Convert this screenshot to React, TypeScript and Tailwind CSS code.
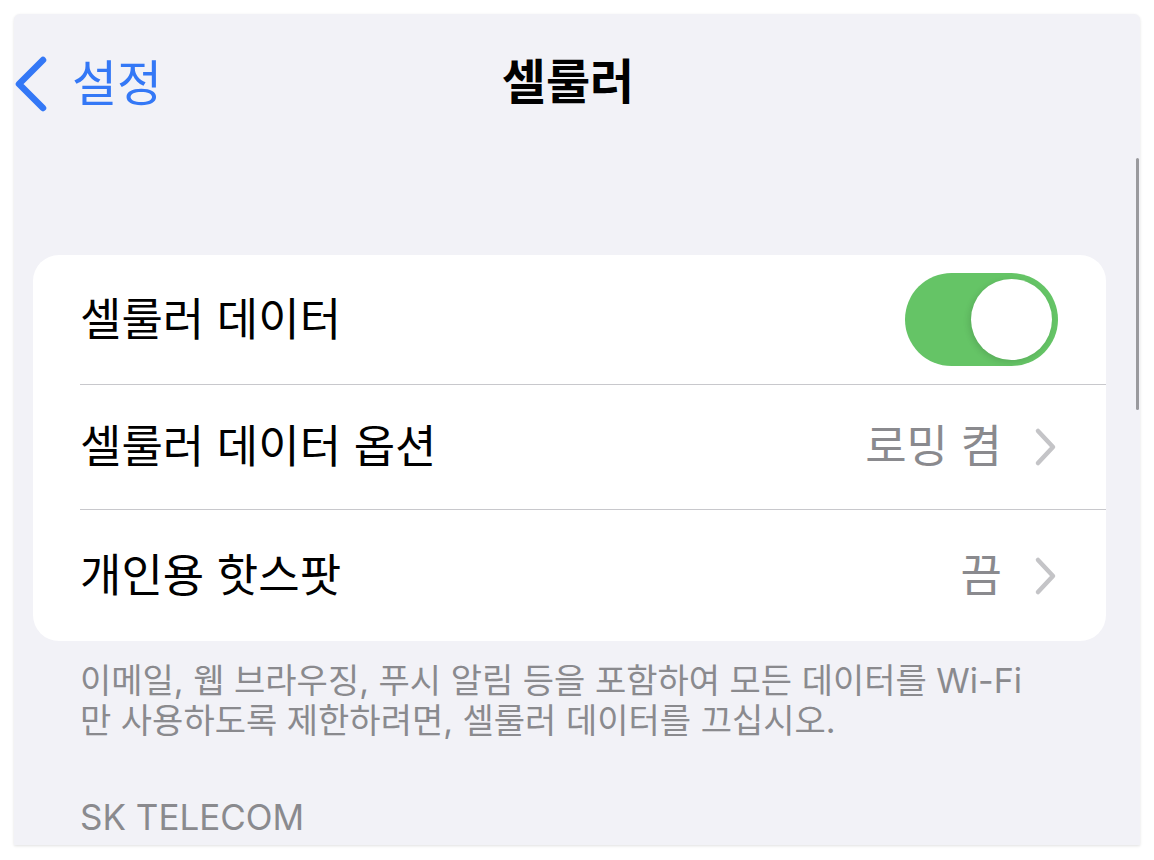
const font = "font-['Inter','Noto_Sans_CJK_KR',sans-serif]";

function Toggle() {
  return (
    <div className="flex h-[93px] w-[153px] items-center justify-end rounded-full bg-[#65c466] pr-[6px]">
      <div className="h-[81px] w-[81px] rounded-full bg-white shadow-[-2px_2px_6px_rgba(0,0,0,0.12)]" />
    </div>
  );
}

function Chevron() {
  return (
    <svg width="24" height="40" viewBox="0 0 24 40" fill="none">
      <polyline
        points="5,4 20,20 5,36"
        stroke="#c4c4c7"
        strokeWidth="4.5"
        strokeLinecap="round"
        strokeLinejoin="round"
      />
    </svg>
  );
}

function Row({
  label,
  value,
  last,
  height,
}: {
  label: string;
  value?: string;
  last?: boolean;
  height: string;
}) {
  return (
    <div className={`flex items-center pr-[49px] ${height} ${last ? "" : "border-b border-[#c8c8cc]"}`}>
      <span className="flex-1 text-[45px] text-black">{label}</span>
      {value && <span className="mr-[31px] text-[45px] text-[#8a8a8e]">{value}</span>}
      <Chevron />
    </div>
  );
}

export default function App() {
  return (
    <div className={`h-[860px] w-[1154px] bg-white px-[14px] pt-[14px] pb-[15px] ${font}`}>
      <div className="relative flex h-full flex-col overflow-hidden rounded-t-[6px] bg-[#f2f2f7] shadow-[0_1px_3px_rgba(0,0,0,0.12)]">
        <div className="relative flex h-[136px] items-start pt-[38px]">
          <div className="flex items-center text-[#3478f6]">
            <svg width="40" height="60" viewBox="0 0 40 60" fill="none" className="mt-[3px]">
              <polyline
                points="29,5 5,29 29,53"
                stroke="#3478f6"
                strokeWidth="6.5"
                strokeLinecap="round"
                strokeLinejoin="round"
              />
            </svg>
            <span className="ml-[18px] text-[49px] leading-[60px]">설정</span>
          </div>
          <div className="absolute left-0 right-[18px] top-[38px] text-center text-[48px] font-bold leading-[60px] text-black">
            셀룰러
          </div>
        </div>

        <div className="ml-[19px] mr-[34px] mt-[105px] rounded-[26px] bg-white pl-[47px]">
          <div className="flex h-[130px] items-center border-b border-[#c8c8cc] pr-[48px]">
            <span className="flex-1 text-[45px] text-black">셀룰러 데이터</span>
            <Toggle />
          </div>
          <Row label="셀룰러 데이터 옵션" value="로밍 켬" height="h-[125px]" />
          <Row label="개인용 핫스팟" value="끔" height="h-[131px]" last />
        </div>

        <p className="ml-[66px] mr-[40px] mt-[20px] text-[34px] leading-[40px] text-[#8a8a8e]">
          이메일, 웹 브라우징, 푸시 알림 등을 포함하여 모든 데이터를 Wi-Fi
          <br />만 사용하도록 제한하려면, 셀룰러 데이터를 끄십시오.
        </p>

        <div className="ml-[66px] mt-[50px] text-[35px] text-[#8a8a8e]">SK TELECOM</div>

        <div className="absolute right-[1px] top-[144px] h-[252px] w-[3px] rounded-full bg-[#9a9a9e]" />
      </div>
    </div>
  );
}
